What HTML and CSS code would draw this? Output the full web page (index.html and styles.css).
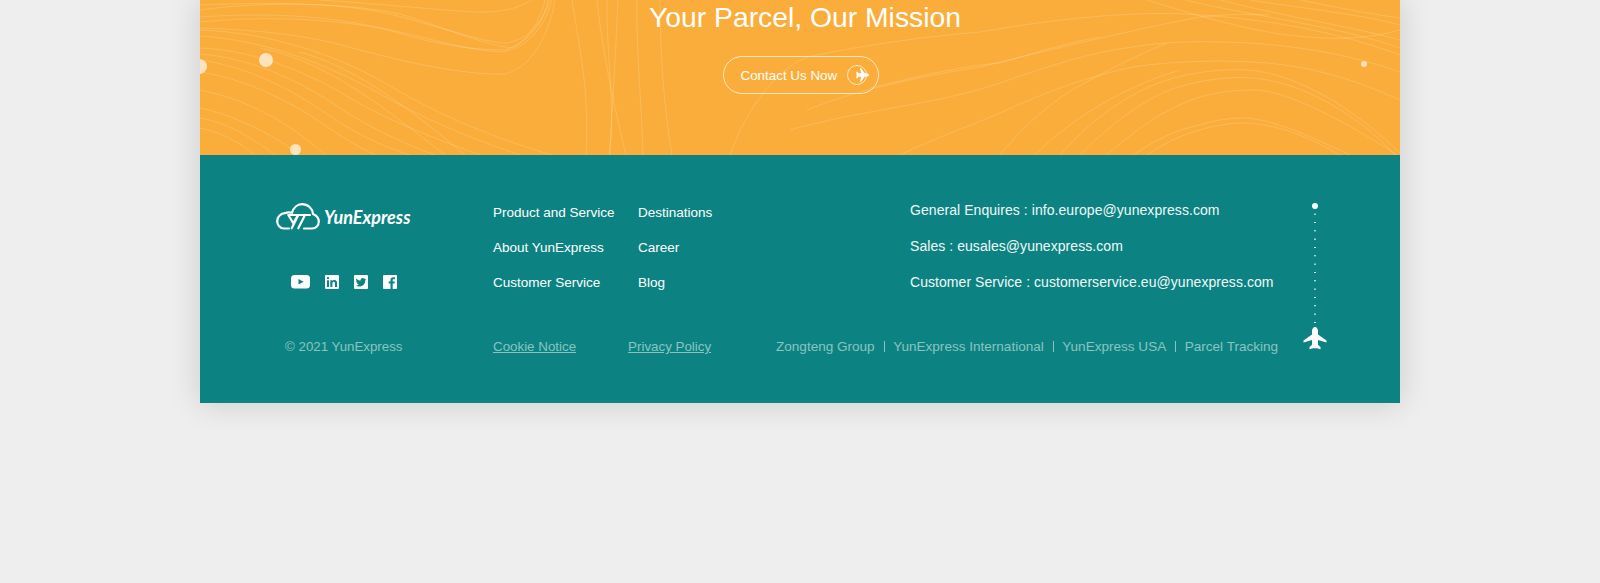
FILE: index.html
```html
<!DOCTYPE html>
<html lang="en">
<head>
    <meta charset="UTF-8">
    <title>YunExpress</title>
    <link rel="stylesheet" href="styles.css">
</head>
<body>

<div class="page">
    <section class="banner">
        <svg class="banner-lines" width="1200" height="155" viewBox="0 0 1200 155" fill="none">
            <g stroke="#fff" stroke-opacity="0.17" stroke-width="1">
                <path d="M120 0C180 4 240 10 275 12C300 13 320 8 332 0"/>
                <path d="M0 10C60 2 130 1 190 14C230 24 270 38 300 43C320 44 340 30 350 0"/>
                <path d="M0 5C70 2 150 3 200 14C235 24 275 42 310 48C326 44 340 22 345 0"/>
                <path d="M0 22C60 16 130 18 190 30C230 38 265 50 300 52C325 50 345 28 352 0"/>
                <path d="M0 17C70 12 140 16 195 32C235 44 270 50 305 50C330 42 345 20 348 0"/>
                <path d="M0 28C60 30 110 35 160 50C220 66 270 75 305 74C335 66 350 30 355 0"/>
                <path d="M0 30C60 32 130 50 190 86C240 116 300 140 352 155"/>
                <path d="M0 36C60 40 120 60 180 94C230 122 280 142 320 155"/>
                <path d="M0 48C50 50 100 68 150 98C190 122 240 140 280 155"/>
                <path d="M0 54C50 58 95 78 140 108C170 128 205 144 235 155"/>
                <path d="M0 60C45 66 90 88 130 116C150 130 180 146 210 155"/>
                <path d="M0 72C40 78 85 98 120 122C140 136 160 148 175 155"/>
                <path d="M0 90C40 98 85 118 125 155"/>
                <path d="M0 108C30 114 70 132 100 155"/>
                <path d="M0 118C25 122 50 136 75 155"/>
                <path d="M0 128C20 132 40 142 55 155"/>
                <path d="M60 48C120 60 170 96 245 155"/>
                <path d="M100 52C150 66 200 100 265 155"/>
                <path d="M372 0C378 40 390 90 386 155"/>
                <path d="M397 0C402 50 415 110 426 155"/>
                <path d="M407 0C406 50 416 110 409 155"/>
                <path d="M418 0C416 50 412 110 410 155"/>
                <path d="M437 0C436 50 442 110 443 155"/>
                <path d="M460 0C460 50 464 110 472 155"/>
                <path d="M947 0C1030 26 1120 52 1200 30"/>
                <path d="M985 0C1060 18 1130 24 1200 48"/>
                <path d="M1050 0C1100 8 1160 14 1200 25"/>
                <path d="M1100 0C1140 8 1170 14 1200 18"/>
                <path d="M1020 0C1090 18 1150 26 1200 40"/>
                <path d="M530 155C542 120 570 72 607 57C670 44 730 36 780 32C860 18 940 10 1000 15C1080 20 1150 36 1200 55"/>
                <path d="M607 110C650 92 720 76 780 67C850 50 930 30 1000 17C1030 14 1050 14 1070 15"/>
                <path d="M590 130C660 110 740 104 800 83C850 66 890 52 933 47C960 42 1000 41 1017 42C1080 42 1150 54 1200 72"/>
                <path d="M670 88C720 76 760 66 800 63C830 54 870 42 900 37"/>
                <path d="M700 155C730 140 770 126 800 113C850 90 890 76 933 67C980 60 1030 60 1067 63C1120 68 1160 82 1200 100"/>
                <path d="M860 155C890 120 930 92 967 80C1000 70 1030 69 1047 70C1090 72 1150 104 1200 153"/>
                <path d="M880 155C905 130 940 100 975 88C1000 80 1030 76 1050 78C1100 80 1160 116 1195 155"/>
                <path d="M907 155C935 130 965 108 1000 97C1020 91 1040 90 1057 90C1090 92 1150 124 1197 155"/>
                <path d="M933 155C955 140 975 130 1000 125C1015 120 1030 118 1043 118C1070 118 1110 136 1150 155"/>
                <path d="M947 155C975 135 1010 124 1043 123C1080 124 1110 138 1140 155"/>
                <path d="M800 155C820 130 842 110 867 93C900 74 935 56 967 43"/>
                <path d="M835 155C870 120 920 88 980 70"/>
            </g>
        </svg>
        <span class="dot dot-edge"></span>
        <span class="dot dot-big"></span>
        <span class="dot dot-low"></span>
        <span class="dot dot-right"></span>
        <h2 class="banner-title">Your Parcel, Our Mission</h2>
        <a class="contact-btn" href="#">
            Contact Us Now
            <span class="contact-icon">
                <svg class="plane-right" width="14" height="14" viewBox="0 0 24 24"><path fill="#fff" d="M12 0c1.700 0 3 2 3 4v3.400l8.500 6v2.200L15 13.100v4.700l2.500 2.100v2.300l-3.500-.9h-4l-3.500.9v-2.300L9 17.800v-4.700L.5 15.600v-2.200L9 7.400V4c0-2 1.300-4 3-4z"/></svg>
            </span>
        </a>
    </section>

    <footer class="footer">
        <div class="footer-top">
            <div class="brand">
                <div class="logo">
                    <svg width="44" height="28" viewBox="0 0 44 28" fill="none" stroke="#fff" stroke-width="2.200" stroke-linejoin="round" stroke-linecap="round">
                        <path d="M13 25.500H8C4 25.500 1.200 22 1.200 18.200C1.200 13.500 5 10.300 9 10.200C11 9.200 13.500 9 16 9.800C17.500 4.500 21.500 1.200 26 1.200C32 1.200 36.500 5.500 37 11C40.500 12.500 42.800 15 42.800 18.500C42.800 22.500 40 25.500 36 25.500H28"/>
                        <path d="M12.300 12H22L17.300 20.300z"/>
                        <path d="M22 12H34"/>
                        <path d="M22.300 12L15.700 25.300"/>
                        <path d="M29 12L22.300 25.300"/>
                    </svg>
                    <span class="logo-name">YunExpress</span>
                </div>
                <div class="social">
                    <svg width="19" height="14" viewBox="0 0 19 14"><rect width="19" height="13.600" rx="3.500" fill="#fff"/><path d="M7.500 4l5 2.800-5 2.800z" fill="#0c8382"/></svg>
                    <svg width="14" height="14" viewBox="0 0 14 14"><rect width="14" height="14" rx="1" fill="#fff"/><path fill="#0c8382" d="M2 5.300h2v6.700H2zM3 2a1.150 1.150 0 110 2.300A1.150 1.150 0 013 2zM5.300 5.300h1.900v.9c.4-.6 1.100-1.100 2.100-1.100 2 0 2.700 1.200 2.700 3V12h-2V8.500c0-.9-.2-1.700-1.200-1.700s-1.400.8-1.400 1.700V12h-2.100z"/></svg>
                    <svg width="14" height="14" viewBox="0 0 14 14"><rect width="14" height="14" rx="1" fill="#fff"/><path fill="#0c8382" d="M11.800 4.100c-.4.200-.8.300-1.200.3.400-.3.800-.700.900-1.200-.4.300-.9.400-1.300.5a2.100 2.100 0 00-3.600 1.900C4.900 5.500 3.400 4.700 2.400 3.400c-.6 1-.3 2.200.7 2.800-.3 0-.7-.1-1-.3 0 1 .7 1.900 1.700 2.100-.3.100-.6.100-.9 0 .3.900 1.100 1.400 2 1.500-.9.700-2 1-3.100.9 3.700 2.300 9.600.7 9.500-5.500.4-.2.700-.5 1-.8z"/></svg>
                    <svg width="14" height="14" viewBox="0 0 14 14"><rect width="14" height="14" rx="1" fill="#fff"/><path fill="#0c8382" d="M9.700 14V8.600h1.800l.3-2.100H9.700V5.200c0-.6.200-1 1-1h1.200V2.300c-.2 0-.9-.1-1.700-.1-1.600 0-2.700 1-2.700 2.800v1.500H5.700v2.100h1.800V14z"/></svg>
                </div>
            </div>
            <ul class="nav-col">
                <li><a href="#">Product and Service</a></li>
                <li><a href="#">About YunExpress</a></li>
                <li><a href="#">Customer Service</a></li>
            </ul>
            <ul class="nav-col">
                <li><a href="#">Destinations</a></li>
                <li><a href="#">Career</a></li>
                <li><a href="#">Blog</a></li>
            </ul>
            <ul class="contact-list">
                <li>General Enquires : info.europe@yunexpress.com</li>
                <li>Sales : eusales@yunexpress.com</li>
                <li>Customer Service : customerservice.eu@yunexpress.com</li>
            </ul>
        </div>
        <div class="footer-bottom">
            <div class="copyright">© 2021 YunExpress</div>
            <div class="legal">
                <a href="#">Cookie Notice</a>
                <a href="#">Privacy Policy</a>
            </div>
            <div class="group-links">
                <a href="#">Zongteng Group</a>
                <a href="#">YunExpress International</a>
                <a href="#">YunExpress USA</a>
                <a href="#">Parcel Tracking</a>
            </div>
        </div>
        <div class="flight">
            <span class="flight-start"></span>
            <span class="flight-path"></span>
            <svg width="24" height="24" viewBox="0 0 24 24"><path fill="#fff" d="M12 0c1.700 0 3 2 3 4v3.400l8.500 6v2.200L15 13.100v4.700l2.500 2.100v2.300l-3.500-.9h-4l-3.500.9v-2.300L9 17.800v-4.700L.5 15.600v-2.200L9 7.400V4c0-2 1.300-4 3-4z"/></svg>
        </div>
    </footer>
</div>

</body>
</html>
```

FILE: styles.css
```css
body {
    margin: 0;
    height: 583px;
    overflow: hidden;
    background-color: #eee;
    font-family: "Liberation Sans", Arial, sans-serif;
}

ul {
    list-style: none;
    margin: 0;
    padding: 0;
}

a {
    color: inherit;
    text-decoration: none;
}

.page {
    width: 1200px;
    margin: 0 auto;
    box-shadow: 0 0 30px rgba(0, 0, 0, 0.15);
}

/* banner */
.banner {
    position: relative;
    height: 155px;
    background-color: #faad3a;
    overflow: hidden;
    text-align: center;
}

.banner-lines {
    position: absolute;
    left: 0;
    top: 0;
}

.dot {
    position: absolute;
    border-radius: 50%;
    background-color: #fde4bf;
}

.dot-edge {
    left: -8px;
    top: 59px;
    width: 15px;
    height: 15px;
}

.dot-big {
    left: 59px;
    top: 53px;
    width: 14px;
    height: 14px;
}

.dot-low {
    left: 90px;
    top: 144px;
    width: 11px;
    height: 11px;
}

.dot-right {
    left: 1161px;
    top: 61px;
    width: 6px;
    height: 6px;
}

.banner-title {
    position: relative;
    margin: 0;
    padding-left: 10px;
    font-size: 28.3px;
    font-weight: 400;
    line-height: 34px;
    color: #fff;
}

.contact-btn {
    position: relative;
    display: inline-flex;
    align-items: center;
    gap: 10px;
    box-sizing: border-box;
    width: 156px;
    height: 38px;
    margin-top: 22px;
    margin-left: 1px;
    padding-left: 17px;
    border: 1px solid #fde9c9;
    border-radius: 19px;
    font-size: 13.4px;
    color: #fff;
}

.contact-icon {
    position: relative;
    box-sizing: border-box;
    width: 20px;
    height: 20px;
    border: 1px solid #fde9c9;
    border-radius: 50%;
}

.plane-right {
    position: absolute;
    left: 7px;
    top: 2px;
    transform: rotate(90deg);
}

/* footer */
.footer {
    position: relative;
    box-sizing: border-box;
    height: 248px;
    padding-top: 48px;
    background-color: #0c8382;
    color: #fff;
    font-size: 13.5px;
}

.footer-top {
    display: flex;
    height: 136px;
}

.brand {
    width: 293px;
    padding-left: 76px;
    box-sizing: border-box;
}

.logo {
    display: flex;
    align-items: center;
    gap: 4px;
}

.logo-name {
    font-family: Lato, sans-serif;
    font-size: 18px;
    font-weight: 700;
    font-style: italic;
}

.social {
    display: flex;
    align-items: center;
    gap: 15px;
    margin-top: 44px;
    padding-left: 15px;
}

.nav-col {
    width: 145px;
}

.nav-col li {
    height: 35px;
    line-height: 20px;
}

.contact-list {
    margin-left: 127px;
    margin-top: -3px;
    font-size: 14px;
    letter-spacing: 0.06px;
}

.contact-list li {
    height: 36px;
    line-height: 20px;
    color: #f1f9f8;
}

.footer-bottom {
    display: flex;
    color: #8ac3c1;
}

.copyright {
    width: 293px;
    padding-left: 85px;
    box-sizing: border-box;
    font-size: 13.3px;
}

.legal {
    display: flex;
    gap: 52px;
    width: 283px;
    font-size: 13.35px;
}

.legal a {
    text-decoration: underline;
}

.group-links {
    display: flex;
    font-size: 13.55px;
}

.group-links a + a {
    margin-left: 9px;
    padding-left: 9.500px;
    background: linear-gradient(#8ac3c1, #8ac3c1) left center / 1px 11px no-repeat;
}

.flight {
    position: absolute;
    left: 1103px;
    top: 48px;
    display: flex;
    flex-direction: column;
    align-items: center;
    width: 24px;
}

.flight-start {
    width: 6px;
    height: 6px;
    border-radius: 50%;
    background-color: #fff;
}

.flight-path {
    width: 2px;
    height: 116.600px;
    margin-top: 1px;
    background: radial-gradient(circle, #fff 0.8px, transparent 1px) center top / 2px 8.330px repeat-y;
}
```
